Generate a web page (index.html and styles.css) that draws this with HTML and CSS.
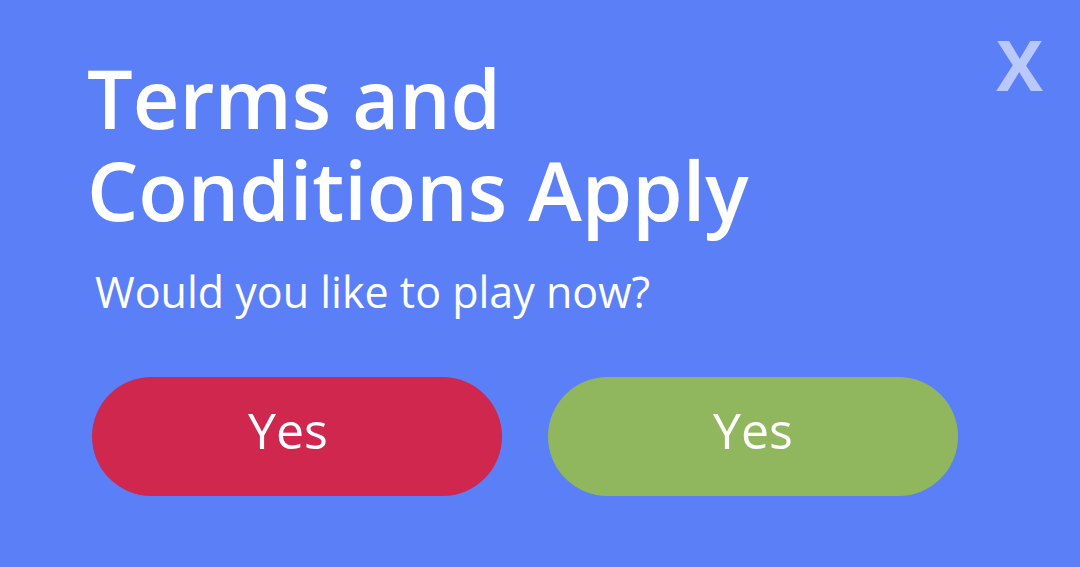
FILE: index.html
```html
<!DOCTYPE html>
<html lang="en">
<head>
  <meta charset="UTF-8">
  <meta name="viewport" content="width=device-width, initial-scale=1.0">
  <title>Terms and Conditions</title>
  <link rel="stylesheet" href="styles.css">
</head>
<body>
  <div class="popup">
    <button class="close" type="button">X</button>

    <h1>Terms and<br>Conditions Apply</h1>
    <p class="question">Would you like to play now?</p>

    <!-- os dois botoes dizem "Yes" -->
    <div class="actions">
      <button type="button" class="btn btn-red">Yes</button>
      <button type="button" class="btn btn-green">Yes</button>
    </div>
  </div>
</body>
</html>
```

FILE: styles.css
```css
html, body {
  margin: 0;
  padding: 0;
}

body {
  font-family: "Open Sans", Arial, sans-serif;
  background: #5b7ff7;
  color: #fff;
  width: 1080px;
  height: 567px;
  overflow: hidden;
}

.popup {
  position: relative;
  padding: 52px 0 0 87px;
}

.close {
  position: absolute;
  top: 16px;
  right: 37px;
  background: none;
  border: none;
  padding: 0;
  font-family: "Open Sans", Arial, sans-serif;
  font-size: 70px;
  font-weight: 700;
  color: rgba(222, 230, 255, 0.72);
  filter: blur(0.7px);
  cursor: pointer;
}

h1 {
  margin: 0;
  font-size: 81px;
  font-weight: 600;
  line-height: 92px;
}

.question {
  margin: 26px 0 0 8px;
  font-size: 43px;
  line-height: 60px;
}

.actions {
  display: flex;
  gap: 46px;
  margin: 55px 0 0 5px;
}

.btn {
  width: 410px;
  height: 119px;
  border: none;
  border-radius: 60px;
  color: #fff;
  font-family: "Open Sans", Arial, sans-serif;
  font-size: 50px;
  padding: 0 0 14px;
  cursor: pointer;
}

.btn-red {
  background: #cf274d;
  padding-right: 18px;
}

.btn-green {
  background: #91b75e;
}
```
